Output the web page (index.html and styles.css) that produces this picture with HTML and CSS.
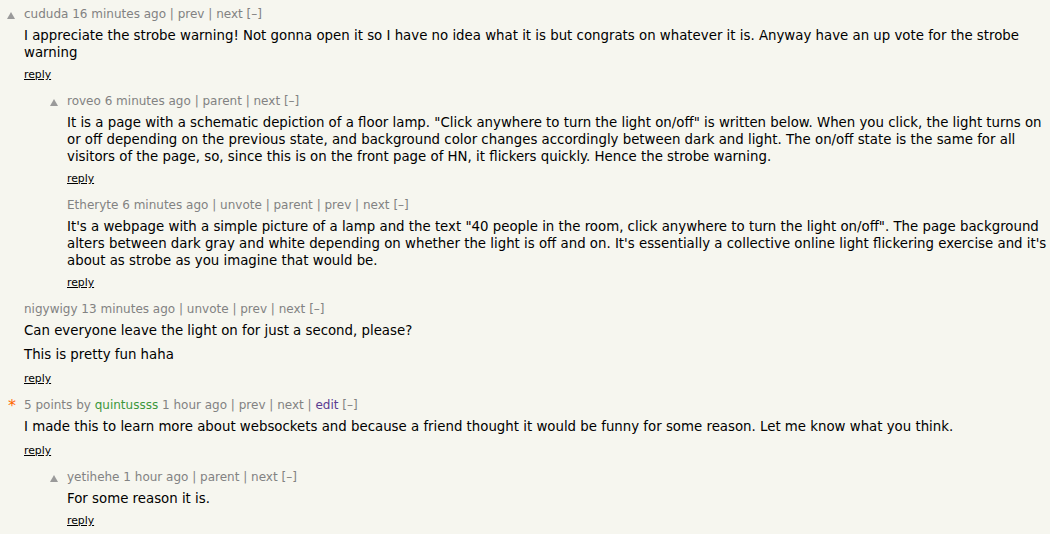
FILE: index.html
```html
<!DOCTYPE html>
<html lang="en">
<head>
<meta charset="utf-8">
<title>Comments</title>
<link rel="stylesheet" href="styles.css">
</head>
<body>
<div class="thread">

  <div class="comment">
    <div class="votes"><span class="arrow"></span></div>
    <div class="main">
      <div class="comhead"><a class="user">cududa</a> <span class="age">16 minutes ago</span> | <a>prev</a> | <a>next</a> <a class="toggle">[–]</a></div>
      <div class="commtext">
        <p>I appreciate the strobe warning! Not gonna open it so I have no idea what it is but congrats on whatever it is. Anyway have an up vote for the strobe warning</p>
      </div>
      <p class="reply"><a>reply</a></p>
    </div>
  </div>

  <div class="comment lvl1">
    <div class="votes"><span class="arrow"></span></div>
    <div class="main">
      <div class="comhead"><a class="user">roveo</a> <span class="age">6 minutes ago</span> | <a>parent</a> | <a>next</a> <a class="toggle">[–]</a></div>
      <div class="commtext">
        <p>It is a page with a schematic depiction of a floor lamp. "Click anywhere to turn the light on/off" is written below. When you click, the light turns on or off depending on the previous state, and background color changes accordingly between dark and light. The on/off state is the same for all visitors of the page, so, since this is on the front page of HN, it flickers quickly. Hence the strobe warning.</p>
      </div>
      <p class="reply"><a>reply</a></p>
    </div>
  </div>

  <div class="comment lvl1">
    <div class="votes"></div>
    <div class="main">
      <div class="comhead"><a class="user">Etheryte</a> <span class="age">6 minutes ago</span> | <a>unvote</a> | <a>parent</a> | <a>prev</a> | <a>next</a> <a class="toggle">[–]</a></div>
      <div class="commtext">
        <p>It's a webpage with a simple picture of a lamp and the text "40 people in the room, click anywhere to turn the light on/off". The page background alters between dark gray and white depending on whether the light is off and on. It's essentially a collective online light flickering exercise and it's about as strobe as you imagine that would be.</p>
      </div>
      <p class="reply"><a>reply</a></p>
    </div>
  </div>

  <div class="comment">
    <div class="votes"></div>
    <div class="main">
      <div class="comhead"><a class="user">nigywigy</a> <span class="age">13 minutes ago</span> | <a>unvote</a> | <a>prev</a> | <a>next</a> <a class="toggle">[–]</a></div>
      <div class="commtext">
        <p>Can everyone leave the light on for just a second, please?</p>
        <p>This is pretty fun haha</p>
      </div>
      <p class="reply roomy"><a>reply</a></p>
    </div>
  </div>

  <div class="comment">
    <div class="votes"><span class="star">*</span></div>
    <div class="main">
      <div class="comhead"><span class="score">5 points</span> by <a class="user op">quintussss</a> <span class="age">1 hour ago</span> | <a>prev</a> | <a>next</a> | <a class="edit">edit</a> <a class="toggle">[–]</a></div>
      <div class="commtext">
        <p>I made this to learn more about websockets and because a friend thought it would be funny for some reason. Let me know what you think.</p>
      </div>
      <p class="reply roomy"><a>reply</a></p>
    </div>
  </div>

  <div class="comment lvl1">
    <div class="votes"><span class="arrow"></span></div>
    <div class="main">
      <div class="comhead"><a class="user">yetihehe</a> <span class="age">1 hour ago</span> | <a>parent</a> | <a>next</a> <a class="toggle">[–]</a></div>
      <div class="commtext">
        <p>For some reason it is.</p>
      </div>
      <p class="reply"><a>reply</a></p>
    </div>
  </div>

</div>
</body>
</html>
```

FILE: styles.css
```css
html, body {
  margin: 0;
  padding: 0;
  background: #f6f6ef;
}

body {
  font-family: "DejaVu Sans", Verdana, Geneva, sans-serif;
  color: #000;
}

.thread {
  display: flex;
  flex-direction: column;
  padding: 5.5px 1px 0 7px;
}

.comment {
  display: flex;
  align-items: flex-start;
  padding-bottom: 10.5px;
}

.comment.lvl1 {
  padding-left: 43px;
}

/* vote column: gray up-arrow or the author's orange star */
.votes {
  flex: 0 0 17px;
  height: 16px;
  position: relative;
}

.arrow {
  position: absolute;
  left: 0;
  top: 6px;
  width: 0;
  height: 0;
  border-left: 4.5px solid transparent;
  border-right: 4.5px solid transparent;
  border-bottom: 7px solid #9a9a9a;
}

.star {
  position: absolute;
  left: 1px;
  top: 0;
  color: #ff6600;
  font-size: 16px;
  line-height: 18px;
}

.main {
  flex: 1;
  min-width: 0;
}

.comhead {
  font-size: 12px;
  line-height: 16px;
  color: #828282;
  margin-bottom: 5.5px;
}

.comhead a {
  color: #828282;
  text-decoration: none;
}

.comhead a.op {
  color: #3c963c;
}

.comhead a.edit {
  color: #5a3c92;
}

.commtext {
  font-size: 13.33px;
  line-height: 17px;
}

.commtext p {
  margin: 0;
}

.commtext p + p {
  margin-top: 7px;
}

.reply {
  margin: 7px 0 0;
  font-size: 10.8px;
  line-height: 14px;
}

.reply.roomy {
  margin-top: 9px;
}

.reply a {
  color: #000;
  text-decoration: underline;
}
```
